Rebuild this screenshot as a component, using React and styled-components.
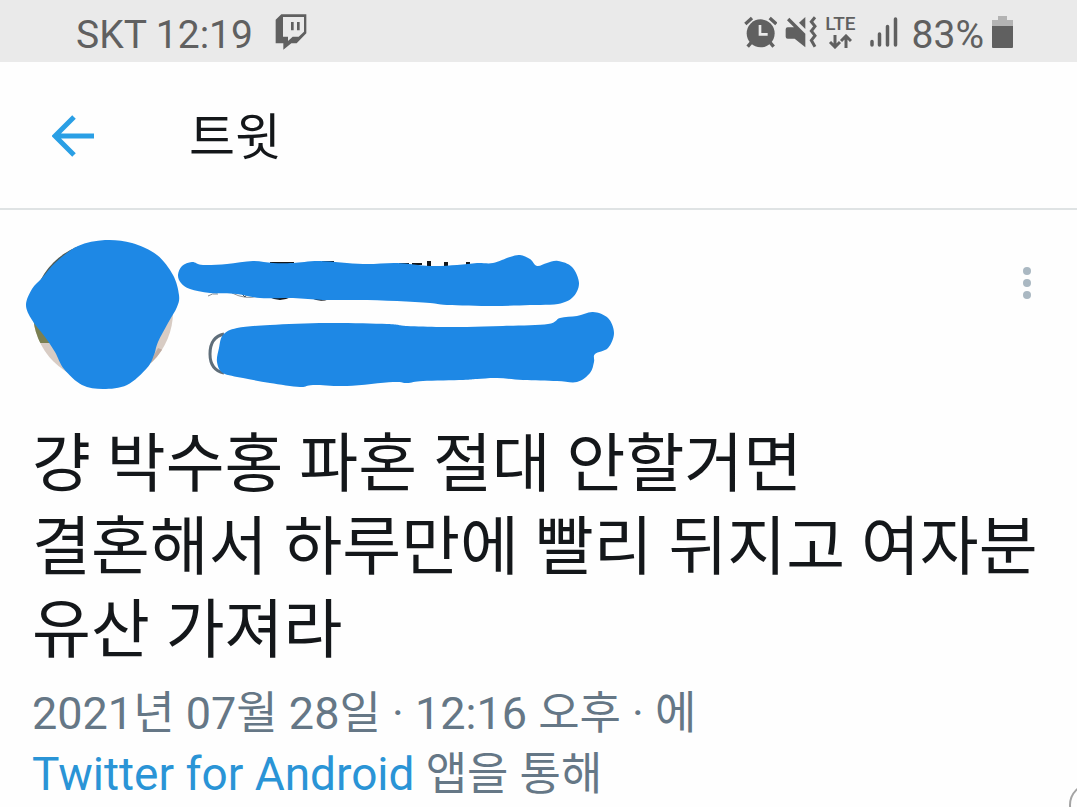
import React from 'react'
import styled, { createGlobalStyle } from 'styled-components'

const BRUSH = '#1e88e5'

// closed smooth curve through every point
const smooth = (pts) => {
  const n = pts.length
  const at = (i) => pts[(i + n) % n]
  let d = `M${at(0).join(' ')}`
  for (let i = 0; i < n; i++) {
    const [p0, p1, p2, p3] = [at(i - 1), at(i), at(i + 1), at(i + 2)]
    d += `C${p1[0] + (p2[0] - p0[0]) / 6} ${p1[1] + (p2[1] - p0[1]) / 6} ${p2[0] - (p3[0] - p1[0]) / 6} ${p2[1] - (p3[1] - p1[1]) / 6} ${p2[0]} ${p2[1]}`
  }
  return d + 'Z'
}

const avatarBrush = [
  [105, 240], [78, 246], [56, 262], [42, 278], [32, 289], [26, 305], [32, 320], [45, 337],
  [55, 352], [64, 369], [82, 385], [103, 389], [127, 385], [147, 368], [154, 355], [158, 342],
  [168, 323], [177, 307], [179, 295], [173, 275], [157, 255], [132, 243],
]
const nameBrush = [
  [178, 275], [182, 266], [192, 262], [203, 265], [227, 264], [253, 261], [273, 263], [293, 263],
  [320, 261], [363, 264], [397, 263], [430, 266], [457, 265], [477, 263], [493, 263], [510, 257],
  [520, 255], [530, 259], [537, 266], [547, 263], [558, 261], [572, 267], [579, 283], [573, 297],
  [558, 304], [530, 305], [493, 306], [447, 305], [430, 303], [397, 301], [357, 300], [323, 300],
  [293, 298], [260, 298], [237, 294], [210, 293], [190, 289], [181, 283],
]
const handleBrush = [
  [223, 335], [237, 328], [270, 325], [327, 323], [387, 324], [407, 326], [440, 327], [467, 327],
  [503, 326], [548, 324], [560, 318], [577, 316], [593, 312], [608, 318], [614, 333], [608, 348],
  [595, 354], [594, 362], [590, 373], [577, 382], [557, 381], [523, 380], [497, 378], [477, 379],
  [463, 380], [423, 381], [407, 383], [393, 382], [347, 386], [313, 385], [300, 387], [270, 383],
  [243, 378], [223, 373], [217, 362], [219, 348],
]

const TwitchIcon = () => (
  <svg width="32" height="36" viewBox="648 44 96 108">
    <path fill="currentColor" d="M650 61L667 45H742V102L713 132H697L673 151V132H650Z" />
    <path fill="#eaeaea" d="M672 53H735V97L719 112H701L687 125V112H672Z" />
    <path fill="currentColor" d="M696 68h8v25h-8zM714 68h8v25h-8z" />
  </svg>
)

const AlarmIcon = () => (
  <svg width="33" height="33" viewBox="46 47 99 99">
    <g fill="none" stroke="currentColor" strokeWidth="10">
      <path d="M50 71L70 53M123 53L143 71" />
      <path d="M70 124L57 139M122 124L135 139" />
    </g>
    <circle cx="96" cy="99" r="42" fill="currentColor" />
    <path d="M94 74V102H117" fill="none" stroke="#eaeaea" strokeWidth="8" />
  </svg>
)

const MuteIcon = () => (
  <svg width="32" height="33" viewBox="164 47 96 99">
    <path fill="currentColor" d="M166 87Q166 81 172 81H191L170 60L177 52L225 100V141L193 115H172Q166 115 166 109Z" />
    <path fill="currentColor" d="M225 50V86L206 67Z" />
    <path d="M254 51L243 64L254 78L243 92L254 106L243 120L254 139" fill="none" stroke="currentColor" strokeWidth="9" />
  </svg>
)

const DataIcon = () => (
  <svg width="24" height="15" viewBox="0 0 24 15">
    <path d="M7 1V12M2 8L7 13L12 8M18 14V3M13 7L18 2L23 7" fill="none" stroke="currentColor" strokeWidth="3" />
  </svg>
)

const SignalIcon = () => (
  <svg width="28" height="30" viewBox="0 0 28 30">
    <path d="M2 24.500V28M9.500 17V28M17.500 9.500V28M25.500 2V28" fill="none" stroke="currentColor" strokeWidth="3.500" strokeLinecap="round" />
  </svg>
)

const BatteryIcon = () => (
  <svg width="21" height="33" viewBox="0 0 21 33">
    <path fill="#b3b3b3" d="M6 0h9v4h6v8H0V4h6z" />
    <path fill="currentColor" d="M0 10h21v21q0 1-1 1H1q-1 0-1-1z" />
  </svg>
)

const BackIcon = () => (
  <svg width="43" height="42" viewBox="0 0 43 42">
    <path d="M22 2L3 21L22 40M3 21H42" fill="none" stroke="#2a9fe5" strokeWidth="5" />
  </svg>
)

const AuthorDrawing = () => (
  <svg width="600" height="160" viewBox="20 235 600 160">
    <defs>
      <clipPath id="avatar"><circle cx="103" cy="312" r="70" /></clipPath>
    </defs>
    <g clipPath="url(#avatar)">
      <rect x="30" y="240" width="146" height="146" fill="#d8ccc4" />
      <path d="M30 238H90V300H30Z" fill="#4e5a54" />
      <path d="M30 300H60V343H38L30 336Z" fill="#7a8052" />
      <path d="M150 362L158 348L168 352L154 366Z" fill="#c0aca2" />
    </g>
    <g fill="none" stroke="#14171a">
      <path d="M208 296Q212 293 218 294M232 293Q246 300 258 296" stroke="#8a8f93" strokeWidth="1" />
      <path d="M242 294L245 297L247 294" stroke="#4a4f53" strokeWidth="1" />
      <path d="M270 296Q280 301 290 296M312 297Q320 301 328 298" strokeWidth="3" />
      <path d="M270 263H294M322 262H334M399 264H409M412 264H422" strokeWidth="2" />
      <path d="M429 261V268M446 262V268M468 262V266" strokeWidth="4" />
      <path d="M224 334Q210 337 210 354Q210 370 224 373" stroke="#5f6e7a" strokeWidth="3" />
    </g>
    <g fill={BRUSH}>
      <path d={smooth(avatarBrush)} />
      <path d={smooth(nameBrush)} />
      <path d={smooth(handleBrush)} />
    </g>
  </svg>
)

function App() {
  return (
    <Page>
      <GlobalStyle />
      <StatusBar>
        <StatusGroup _gap={22}>
          <StatusText>SKT 12:19</StatusText>
          <TwitchIcon />
        </StatusGroup>
        <StatusGroup _gap={14}>
          <StatusGroup _gap={8}>
            <AlarmIcon />
            <MuteIcon />
            <Network>
              <NetworkLabel>LTE</NetworkLabel>
              <DataIcon />
            </Network>
          </StatusGroup>
          <SignalIcon />
          <StatusGroup _gap={8}>
            <StatusText>83%</StatusText>
            <BatteryIcon />
          </StatusGroup>
        </StatusGroup>
      </StatusBar>
      <Header>
        <IconButton aria-label="뒤로"><BackIcon /></IconButton>
        <Title>트윗</Title>
      </Header>
      <Tweet>
        <Author>
          <AuthorDrawing />
          <MoreButton aria-label="더보기">
            <Dot /><Dot /><Dot />
          </MoreButton>
        </Author>
        <Content>
          걍 박수홍 파혼 절대 안할거면<br />
          결혼해서 하루만에 빨리 뒤지고 여자분<br />
          유산 가져라
        </Content>
        <Meta>
          2021년 07월 28일 · 12:16 오후 · 에<br />
          <Source href="#">Twitter for Android</Source> 앱을 통해
        </Meta>
      </Tweet>
      <Corner />
    </Page>
  )
}

export default App


const GlobalStyle = createGlobalStyle`
  * {
    box-sizing: border-box;
  }
  body {
    margin: 0;
    background: #fefefe;
    font-family: Roboto, "Noto Sans CJK KR", sans-serif;
  }
  svg {
    display: block;
    flex-shrink: 0;
  }
`
const Page = styled.div`
  position: relative;
  min-height: 100vh;
  overflow: hidden;
`
const StatusBar = styled.div`
  display: flex;
  justify-content: space-between;
  align-items: center;
  height: 62px;
  padding: 2px 64px 0 76px;
  background: #eaeaea;
  color: #606060;
`
const StatusGroup = styled.div`
  display: flex;
  align-items: center;
  gap: ${({ _gap }) => _gap}px;
`
const StatusText = styled.span`
  padding-top: 6px;
  font-size: 39px;
  line-height: 46px;
`
const Network = styled.div`
  display: flex;
  flex-direction: column;
  align-items: center;
  gap: 1px;
`
const NetworkLabel = styled.span`
  font-size: 19px;
  font-weight: 500;
  line-height: 18px;
`
const Header = styled.header`
  display: flex;
  align-items: center;
  gap: 94px;
  height: 148px;
  padding: 2px 52px 0;
  border-bottom: 2px solid #dfe3e4;
`
const IconButton = styled.button`
  padding: 0;
  border: 0;
  background: none;
`
const Title = styled.h1`
  margin: 0;
  padding-top: 4px;
  color: #14171a;
  font-size: 50px;
  font-weight: 400;
  line-height: 60px;
`
const Tweet = styled.article`
  padding: 25px 32px 0;
`
const Author = styled.div`
  display: flex;
  justify-content: space-between;
  align-items: flex-start;
  margin-left: -12px;
`
const MoreButton = styled(IconButton)`
  display: flex;
  flex-direction: column;
  align-items: center;
  gap: 4px;
  width: 36px;
  padding-top: 32px;
`
const Dot = styled.span`
  width: 8px;
  height: 8px;
  border-radius: 50%;
  background: #aab8c2;
`
const Content = styled.p`
  margin: 28px 0 0;
  color: #14171a;
  font-size: 64px;
  line-height: 83px;
  white-space: nowrap;
`
const Meta = styled.p`
  margin: 12px 0 0;
  color: #657786;
  font-size: 45px;
  line-height: 60px;
`
const Source = styled.a`
  color: #2a94d6;
  font-size: 46px;
  text-decoration: none;
`
const Corner = styled.div`
  position: absolute;
  right: -36px;
  bottom: -20px;
  width: 44px;
  height: 44px;
  border: 2px solid #a4a4a4;
  border-radius: 50%;
`
